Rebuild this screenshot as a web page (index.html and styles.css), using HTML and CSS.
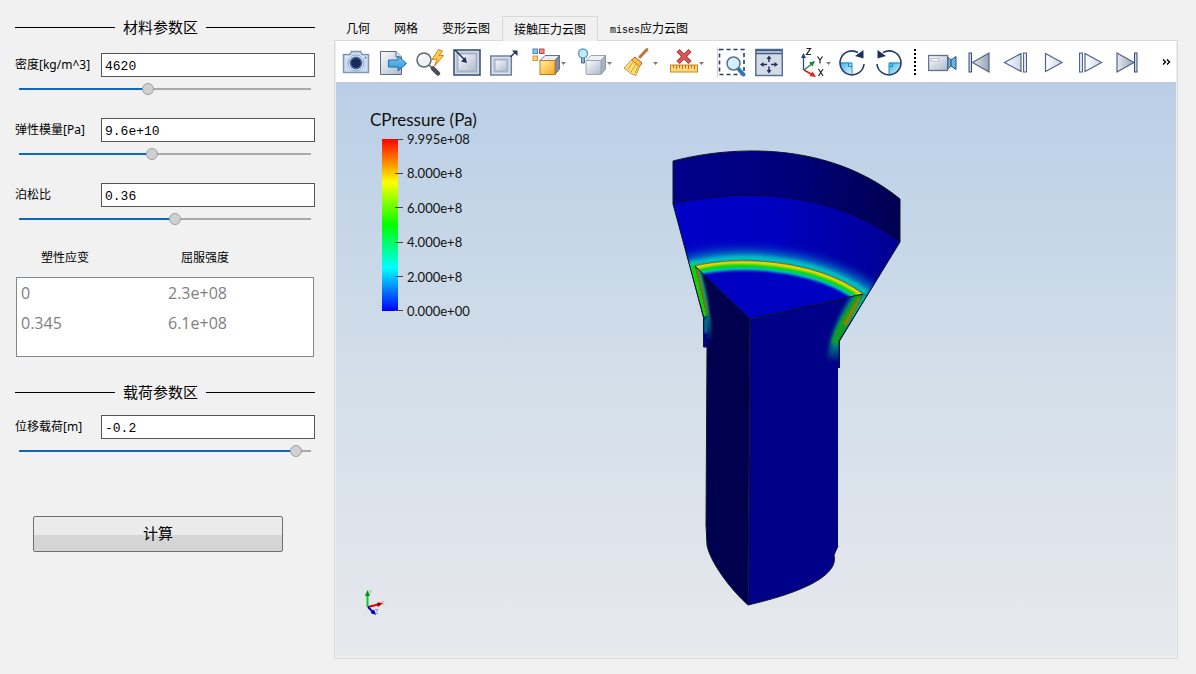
FILE: index.html
```html
<!DOCTYPE html>
<html lang="zh-CN">
<head>
<meta charset="utf-8">
<title>接触压力云图</title>
<link rel="stylesheet" href="styles.css">
</head>
<body>
<div class="app">
  <aside class="side">
    <h2 class="section-title">材料参数区</h2>
    <div class="fields">
      <div class="field">
        <label for="density">密度[kg/m^3]</label>
        <input class="value" id="density" type="text" value="4620">
        <input class="slider" type="range" aria-label="密度" min="0" max="1000" value="438" style="--fill:43.8%">
      </div>
      <div class="field">
        <label for="modulus">弹性模量[Pa]</label>
        <input class="value" id="modulus" type="text" value="9.6e+10">
        <input class="slider" type="range" aria-label="弹性模量" min="0" max="1000" value="452" style="--fill:45.2%">
      </div>
      <div class="field">
        <label for="poisson">泊松比</label>
        <input class="value" id="poisson" type="text" value="0.36">
        <input class="slider" type="range" aria-label="泊松比" min="0" max="1000" value="537" style="--fill:53.7%">
      </div>
    </div>
    <table class="plastic">
      <thead><tr><th>塑性应变</th><th>屈服强度</th></tr></thead>
      <tbody>
        <tr><td>0</td><td>2.3e+08</td></tr>
        <tr><td>0.345</td><td>6.1e+08</td></tr>
      </tbody>
    </table>
    <h2 class="section-title section-load">载荷参数区</h2>
    <div class="fields">
      <div class="field">
        <label for="load">位移载荷[m]</label>
        <input class="value" id="load" type="text" value="-0.2">
        <input class="slider" type="range" aria-label="位移载荷" min="0" max="1000" value="969" style="--fill:96.9%">
      </div>
    </div>
    <button class="compute" type="button">计算</button>
  </aside>

  <main class="main">
    <div class="tabs" role="tablist">
      <button class="tab" role="tab" type="button">几何</button>
      <button class="tab" role="tab" type="button">网格</button>
      <button class="tab" role="tab" type="button">变形云图</button>
      <button class="tab tab-active" role="tab" type="button" aria-selected="true">接触压力云图</button>
      <button class="tab" role="tab" type="button"><span class="latin">mises</span>应力云图</button>
    </div>
    <div class="pane">
      <svg class="defs" width="0" height="0" aria-hidden="true">
        <defs>
          <linearGradient id="steel" x1="0" y1="0" x2="1" y2="1"><stop offset="0" stop-color="#fbfcfe"/><stop offset="1" stop-color="#aeb8ca"/></linearGradient>
          <linearGradient id="sky" x1="0" y1="0" x2="0" y2="1"><stop offset="0" stop-color="#7cc8f4"/><stop offset="1" stop-color="#2a93d6"/></linearGradient>
          <linearGradient id="gold" x1="0" y1="0" x2="1" y2="1"><stop offset="0" stop-color="#fff0a8"/><stop offset="1" stop-color="#f7a51c"/></linearGradient>
          <linearGradient id="quad" x1="0" y1="0" x2="1" y2="1"><stop offset="0" stop-color="#37b4ea"/><stop offset="1" stop-color="#e4f5fd"/></linearGradient>
          <linearGradient id="play" x1="0" y1="0" x2="1" y2="0"><stop offset="0" stop-color="#ffffff"/><stop offset="1" stop-color="#ccd6e6"/></linearGradient>
          <linearGradient id="grey" x1="0" y1="0" x2="1" y2="0"><stop offset="0" stop-color="#e6e8ec"/><stop offset="1" stop-color="#9aa3b2"/></linearGradient>
        </defs>
      </svg>
      <div class="toolbar" role="toolbar">
        <button class="tool" type="button" aria-label="截图"><svg width="28" height="32"><path d="M1.500 8.500H8L9.500 5.500H18.500L20 8.500H26.500V26.500H1.500Z" fill="#c9def3" stroke="#8294b4" stroke-width="1.500" stroke-linejoin="round"/><path d="M3 11H25" stroke="#f2f8fe"/><circle cx="14" cy="17" r="8" fill="#e3edf7" stroke="#90a8c8"/><circle cx="14" cy="17" r="6.500" fill="#4a6c9f"/><circle cx="14" cy="17" r="4.800" fill="#182c5a"/><circle cx="23.500" cy="11.500" r="1" fill="#4e6ea5"/></svg></button>
        <button class="tool" type="button" aria-label="导出"><svg width="28" height="32"><path d="M1.500 5.500H17L22.500 11V28.500H1.500Z" fill="url(#steel)" stroke="#5c6b85"/><path d="M17 5.500V11H22.500" fill="#dfe5ee" stroke="#5c6b85"/><path d="M9.500 14H19V10L27.500 17.500L19 25V21H9.500Z" fill="url(#sky)" stroke="#1a6eae"/></svg></button>
        <button class="tool" type="button" aria-label="快速查询"><svg width="28" height="32"><path d="M13 19L16 22" stroke="#7a8089" stroke-width="2"/><path d="M17 22.500L22 27.500" stroke="#4b4e55" stroke-width="4.500" stroke-linecap="round"/><circle cx="8" cy="14" r="7" fill="#eef2f6" stroke="#5d6673" stroke-width="1.500"/><path d="M4 13Q5 9.500 9 9.500" stroke="#fff" stroke-width="2" fill="none"/><path d="M22.500 3.500L16 13.500L21 13L18.500 20L27.500 9.500H23L26.500 5Z" fill="#ffcf4d" stroke="#e57a1b"/></svg></button>
        <button class="tool" type="button" aria-label="缩放到数据"><svg width="28" height="32"><rect x="1" y="4" width="26" height="25" fill="#d3dae5" stroke="#3f547d" stroke-width="1.600"/><rect x="4.500" y="7.500" width="19" height="18" fill="url(#steel)" stroke="#a7b3c7" stroke-width="2"/><path d="M2 4L12 14" stroke="#233862" stroke-width="1.500"/><path d="M14 17L8 15.500L12.500 11Z" fill="#1c315c"/></svg></button>
        <button class="tool" type="button" aria-label="还原视图"><svg width="28" height="32"><rect x=".8" y="10" width="20.500" height="19" fill="#dce2eb" stroke="#6f7f9b" stroke-width="1.500"/><rect x="4.500" y="13.500" width="13" height="12" fill="url(#steel)" stroke="#a7b3c7" stroke-width="2"/><path d="M20.500 11L25 6.500" stroke="#233862" stroke-width="1.500"/><path d="M22 4.500H27.500V10Z" fill="#1c315c"/></svg></button>
        <button class="tool tool-menu" type="button" aria-label="着色"><svg width="40" height="32"><rect x="6" y="3" width="4.500" height="4.500" fill="#8cc7ea" stroke="#368bbd"/><rect x="12.500" y="3" width="4.500" height="4.500" fill="#ea8b8b" stroke="#c24848"/><rect x="6" y="10" width="4.500" height="4.500" fill="#fbd08a" stroke="#e59129"/><path d="M13 14.500L18 9.500H32.500L28 14.500Z" fill="#e8edf5" stroke="#65728a"/><path d="M28 14.500L32.500 9.500V23L28 28.500Z" fill="#7d8ba5" stroke="#65728a"/><rect x="13" y="14.500" width="15" height="14" fill="url(#gold)" stroke="#c37a16"/><path d="M34 16H39L36.500 19Z" fill="#7b7b7b"/></svg></button>
        <button class="tool tool-menu" type="button" aria-label="光照"><svg width="40" height="32"><path d="M13 14.500L18 9.500H32.500L28 14.500Z" fill="#eef0f3" stroke="#9ca5b3"/><path d="M28 14.500L32.500 9.500V23L28 28.500Z" fill="#abb3c0" stroke="#8d98a9"/><rect x="13" y="14.500" width="15" height="14" rx="1" fill="url(#steel)" stroke="#9ca5b3"/><path d="M8.500 11H11.500V17H8.500Z" fill="#9baac0" stroke="#53698d"/><circle cx="10" cy="7.500" r="4.500" fill="#c8e9fb" stroke="#4ba0d2" stroke-width="1.400"/><path d="M34 16H39L36.500 19Z" fill="#7b7b7b"/></svg></button>
        <button class="tool tool-menu" type="button" aria-label="清除"><svg width="40" height="32"><path d="M21 11L28 3.500" stroke="#bd733a" stroke-width="3" stroke-linecap="round"/><path d="M16 11L23 17L20.500 20.500L12.500 14Z" fill="#f9bf48" stroke="#a35d28"/><path d="M12.500 14L20.500 20.500L17 29.500L12 27.500L9 25L5 22Z" fill="#ffe27b" stroke="#d28d24"/><path d="M14 16L9 23M17 18L12 26M19 20L16 27" stroke="#d89b2d" fill="none"/><path d="M34 16H39L36.500 19Z" fill="#7b7b7b"/></svg></button>
        <button class="tool tool-menu" type="button" aria-label="删除标尺"><svg width="40" height="32"><path d="M13 4.500L25 16.500M25 4.500L13 16.500" stroke="#a93838" stroke-width="4.500"/><path d="M13.500 5L24.500 16M24.500 5L13.500 16" stroke="#d85858" stroke-width="2.600"/><rect x="5.500" y="19" width="27" height="7" fill="#ffd878" stroke="#cc8422"/><path d="M8.500 19V22M11.500 19V23M14.500 19V22M17.500 19V23M20.500 19V22M23.500 19V23M26.500 19V22M29.500 19V23" stroke="#b56c1c"/><path d="M34 16H39L36.500 19Z" fill="#7b7b7b"/></svg></button>
        <span class="divider"></span>
        <button class="tool" type="button" aria-label="框选缩放"><svg width="28" height="32"><rect x="1.500" y="3.500" width="24.500" height="25" fill="none" stroke="#24406e" stroke-width="1.600" stroke-dasharray="4 3"/><path d="M20 22.500L25.500 28.500" stroke="#2d79b7" stroke-width="4" stroke-linecap="round"/><circle cx="15.500" cy="17.500" r="6.500" fill="#d5effb" stroke="#527392" stroke-width="1.500"/></svg></button>
        <button class="tool" type="button" aria-label="适应窗口"><svg width="28" height="32"><rect x=".8" y="3.500" width="26.500" height="26" fill="#d4dbe6" stroke="#5a6f95" stroke-width="1.500"/><path d="M1 4.500H27M1 7.500H27" stroke="#3d5888" stroke-width="1.500"/><path d="M14 11.500V16M14 20.500V25M7.500 18.500H12M16 18.500H20.500" stroke="#1f3259" stroke-width="1.500"/><path d="M14 9.500L16.500 13H11.500ZM14 27.500L16.500 24H11.500ZM5 18.500L8.500 16V21ZM23 18.500L19.500 16V21Z" fill="#1f3259"/></svg></button>
        <button class="tool tool-menu" type="button" aria-label="坐标轴方向"><svg width="40" height="32"><path d="M11.500 24V10" stroke="#264791" stroke-width="1.300"/><path d="M11.500 7L14 12H9Z" fill="#233f96"/><path d="M12 24L19 18.500" stroke="#16853c" stroke-width="1.300"/><path d="M23 15L20.500 20.500L17 16.500Z" fill="#16853c"/><path d="M12 24L19 28" stroke="#e11c1c" stroke-width="1.500"/><path d="M24 31L17.500 30L20.500 25.500Z" fill="#e11c1c"/><path d="M14.500 2.500H18.500L14.500 8.500H19M25.500 10.500L28 14L30.500 10.500M28 14V17.500M26.500 23L31 30M31 23L26.500 30" fill="none" stroke="#222" stroke-width="1.200"/><path d="M34 16H39L36.500 19Z" fill="#7b7b7b"/></svg></button>
        <button class="tool" type="button" aria-label="顺时针旋转"><svg width="28" height="32"><path d="M2 16.500H14V29Q3 27 2 16.500Z" fill="url(#quad)"/><path d="M2 17H14V29" fill="none" stroke="#2788bc"/><path d="M10.500 17V20.500H14" fill="none" stroke="#2788bc"/><path d="M20 6.500A12 12 0 1 0 26 18" fill="none" stroke="#263c68" stroke-width="1.600"/><path d="M25.500 4V12.500L17 10Z" fill="#1c315c"/></svg></button>
        <button class="tool" type="button" aria-label="逆时针旋转"><svg width="28" height="32"><path d="M26 16.500H14V29Q25 27 26 16.500Z" fill="url(#quad)"/><path d="M26 17H14V29" fill="none" stroke="#2788bc"/><path d="M17.500 17V20.500H14" fill="none" stroke="#2788bc"/><path d="M8 6.500A12 12 0 1 1 2 18" fill="none" stroke="#263c68" stroke-width="1.600"/><path d="M2.500 4V12.500L11 10Z" fill="#1c315c"/></svg></button>
        <span class="grip"></span>
        <button class="tool" type="button" aria-label="录制"><svg width="30" height="32"><rect x=".6" y="9.500" width="19" height="15" fill="url(#steel)" stroke="#61718f" stroke-width="1.300"/><rect x="3" y="12.500" width="8" height="2.500" fill="#fff" stroke="#a5aebd" stroke-width=".7"/><path d="M20 11L23 14V20L20 23Z" fill="#72b8df" stroke="#3e6287"/><path d="M23 14L28 10.500V23.500L23 20Z" fill="#60b6e4" stroke="#304d78"/></svg></button>
        <button class="tool" type="button" aria-label="首帧"><svg width="28" height="32"><rect x="4" y="7" width="2.500" height="19" fill="#cbd6e5" stroke="#344c78"/><path d="M24 7V26L7.500 16.500Z" fill="url(#grey)" stroke="#50648a" stroke-width="1.200"/></svg></button>
        <button class="tool" type="button" aria-label="上一帧"><svg width="28" height="32"><path d="M19 7.500V25.500L2.500 16.500Z" fill="url(#play)" stroke="#50648a" stroke-width="1.200"/><rect x="21.500" y="7" width="3" height="19" fill="#dce4ef" stroke="#50648a"/></svg></button>
        <button class="tool" type="button" aria-label="播放"><svg width="28" height="32"><path d="M6.500 7.500V25.500L23 16.500Z" fill="url(#play)" stroke="#50648a" stroke-width="1.200"/></svg></button>
        <button class="tool" type="button" aria-label="下一帧"><svg width="28" height="32"><rect x="3.500" y="7" width="3" height="19" fill="#dce4ef" stroke="#50648a"/><path d="M9 7.500V25.500L25.500 16.500Z" fill="url(#play)" stroke="#50648a" stroke-width="1.200"/></svg></button>
        <button class="tool" type="button" aria-label="末帧"><svg width="28" height="32"><path d="M4 7V26L21 16.500Z" fill="url(#grey)" stroke="#50648a" stroke-width="1.200"/><rect x="21.500" y="7" width="2.500" height="19" fill="#cbd6e5" stroke="#344c78"/></svg></button>
        <button class="more" type="button" aria-label="更多"><svg width="9" height="8"><path d="M1 1.500L3.500 4L1 6.500M5 1.500L7.500 4L5 6.500" fill="none" stroke="#000" stroke-width="1.400"/></svg></button>
      </div>
      <div class="viewport">
        <svg class="scene" viewBox="336 82 840 574" role="img" aria-label="接触压力模型">
          <defs>
            <linearGradient id="rim"><stop offset="0" stop-color="#00008a"/><stop offset=".5" stop-color="#00007c"/><stop offset="1" stop-color="#000050"/></linearGradient>
            <linearGradient id="cone"><stop offset="0" stop-color="#0000c8"/><stop offset=".45" stop-color="#0000c0"/><stop offset="1" stop-color="#000092"/></linearGradient>
            <linearGradient id="fadeL" x1="0" y1="266" x2="0" y2="342" gradientUnits="userSpaceOnUse"><stop offset="0" stop-color="#00b880"/><stop offset=".6" stop-color="#008f78"/><stop offset="1" stop-color="#000070"/></linearGradient>
            <linearGradient id="fadeR" x1="0" y1="294" x2="0" y2="362" gradientUnits="userSpaceOnUse"><stop offset="0" stop-color="#008c90"/><stop offset=".7" stop-color="#009a78"/><stop offset="1" stop-color="#000088"/></linearGradient>
            <filter id="soft1" x="-30%" y="-30%" width="160%" height="160%"><feGaussianBlur stdDeviation="1"/></filter>
            <filter id="soft2" x="-30%" y="-50%" width="160%" height="200%"><feGaussianBlur stdDeviation="2"/></filter>
            <filter id="soft5" x="-30%" y="-80%" width="160%" height="260%"><feGaussianBlur stdDeviation="5"/></filter>
            <clipPath id="clipCone"><path d="M673 204C735 189 830 188 900 242L839 341L750 330L704 347V317Z"/></clipPath>
            <clipPath id="clipTop"><path d="M695 266C735 256 815 258 863 294L750 319Z"/></clipPath>
            <clipPath id="clipLeft"><path d="M695 266L750 319L748 605L707 545V317Z"/></clipPath>
            <clipPath id="clipRight"><path d="M750 319L863 294L839 341V368H837V545L748 605Z"/></clipPath>
          </defs>
          <path d="M673 204L703 317V347H708V317H839V368H840V341L900 242V225L790 180Z" fill="url(#cone)"/>
          <g clip-path="url(#clipCone)" fill="none">
            <path d="M684 263C735 250 815 252 874 293" stroke="#0074c4" stroke-width="12" filter="url(#soft5)"/>
            <path d="M690 265C735 253 815 255 868 294" stroke="#00d5bd" stroke-width="6" filter="url(#soft2)"/>
            <path d="M690 262L705 318" stroke="#00c89a" stroke-width="12" filter="url(#soft1)"/>
            <path d="M693 266L706 316" stroke="#18cf00" stroke-width="7" filter="url(#soft1)"/>
            <path d="M866 296L840 340" stroke="#00b47b" stroke-width="8" filter="url(#soft1)"/>
          </g>
          <path d="M704 318H708V347H704Z" fill="#000090"/>
          <path d="M704 318H708V333H704Z" fill="#006e8c" filter="url(#soft1)"/>
          <path d="M695 266L750 319L748 605C731 590 710 562 707 545L706 525L707 347V317Z" fill="#00004f"/>
          <g clip-path="url(#clipLeft)" fill="none">
            <path d="M697 268C703 290 708 310 709 340" stroke="url(#fadeL)" stroke-width="6" filter="url(#soft1)"/>
            <path d="M696 269L706 315" stroke="#a06a00" stroke-width="4" filter="url(#soft1)"/>
          </g>
          <path d="M695 266C735 256 815 258 863 294L750 319Z" fill="#0000c2"/>
          <g clip-path="url(#clipTop)" fill="none">
            <path d="M695 266C735 256 815 258 863 294" stroke="#00c7d0" stroke-width="19" filter="url(#soft1)"/>
            <path d="M695 266C735 256 815 258 863 294" stroke="#05d51b" stroke-width="14" filter="url(#soft1)"/>
            <path d="M695 266C735 256 815 258 863 294" stroke="#f0d800" stroke-width="7" filter="url(#soft1)"/>
          </g>
          <path d="M750 319L863 294L839 341V368H838V546L834 555C839 575 804 592 748 605Z" fill="#000088"/>
          <g clip-path="url(#clipRight)" fill="none">
            <path d="M861 294C847 317 837 335 834 362" stroke="url(#fadeR)" stroke-width="14" filter="url(#soft2)"/>
            <path d="M862 296C850 315 840 329 837 344" stroke="#0c9e20" stroke-width="11" filter="url(#soft1)"/>
            <path d="M861 298L845 325" stroke="#9a8000" stroke-width="5" filter="url(#soft1)"/>
          </g>
          <path d="M673 161C735 145 830 142 900 199V242C830 188 735 189 673 204Z" fill="url(#rim)"/>
          <g fill="none" stroke="#111827" stroke-width="1">
            <path d="M673 204V161C735 145 830 142 900 199V242L839 341V368"/>
            <path d="M673 204L703.500 317V347H707M703 317H707"/>
            <path d="M673 204C735 189 830 188 900 242" stroke="#00003a"/>
            <path d="M695 266L750 319L863 294M750 319L748 605M707 347L706 525L707 545C710 562 731 590 748 605C804 592 839 575 834 555L838 546"/>
            <path d="M695 266C735 256 815 258 863 294" stroke="#765c13" stroke-width=".7"/>
          </g>
          <g stroke-width="1.500">
            <path d="M367.500 607V594" stroke="#00cf22" stroke-width="2"/><path d="M367.500 590L370 596H365Z" fill="#078d1a"/>
            <path d="M368 607L378 604.500" stroke="#e60000" stroke-width="2"/><path d="M383 603L378 607L377 602.500Z" fill="#930000"/>
            <path d="M368 607L373 612" stroke="#0000e0" stroke-width="2"/><path d="M376 615L370.500 613L374 609.500Z" fill="#00008d"/>
            <g fill="none" stroke-width=".8"><path d="M369 590L370.500 592L372 590M370.500 592V594" stroke="#5de070"/><path d="M381 601L384 605M384 601L381 605" stroke="#f08080"/><path d="M375 609.500H378L375 613.500H378" stroke="#8080f0"/></g>
          </g>
        </svg>
        <div class="legend">
          <div class="legend-title">CPressure (Pa)</div>
          <div class="legend-body">
            <div class="legend-bar"></div>
            <ul class="legend-labels">
              <li>9.995e+08</li><li>8.000e+8</li><li>6.000e+8</li><li>4.000e+8</li><li>2.000e+8</li><li>0.000e+00</li>
            </ul>
          </div>
        </div>
      </div>
    </div>
  </main>
</div>
</body>
</html>
```
FILE: styles.css
```css
* { box-sizing: border-box; }

body {
  margin: 0;
  background: #f1f1f1;
  color: #000;
  font-family: "Noto Sans", "Noto Sans CJK SC", sans-serif;
  font-size: 12px;
}

button, input { font: inherit; color: inherit; margin: 0; }

.app { display: flex; min-height: 100vh; }

/* Parameter column */
.side { flex: 0 0 334px; padding: 15px 19px 0 15px; }

.section-title {
  display: flex;
  align-items: center;
  gap: 8px;
  margin: 0 0 14px;
  font-family: "Noto Sans CJK SC", sans-serif;
  font-size: 15px;
  font-weight: 400;
  line-height: 24px;
}
.section-title::before, .section-title::after { content: ""; height: 1px; background: #000; }
.section-title::before { width: 100px; }
.section-title::after { flex: 1; }
.section-load { margin: 23px 0 11px; }

.fields { display: grid; gap: 23px; }
.field { display: grid; grid-template-columns: 86px 1fr; row-gap: 6px; align-items: center; }
.field label { line-height: 24px; white-space: nowrap; }

.value {
  width: 100%;
  height: 24px;
  padding: 2px 3px 0;
  border: 1px solid #555;
  background: #fff;
  font-family: "Liberation Mono", monospace;
  font-size: 13px;
}

.slider {
  grid-column: 1 / -1;
  appearance: none;
  height: 12px;
  margin: 0 4px;
  background: linear-gradient(#0d69bd, #0d69bd) 0 5px / var(--fill) 2px no-repeat,
    linear-gradient(#aaa, #aaa) 0 5px / 100% 2px no-repeat;
}
.slider::-webkit-slider-thumb {
  appearance: none;
  width: 12px;
  height: 12px;
  border: 1px solid #9f9f9f;
  border-radius: 50%;
  background: #d0d0d0;
}

.plastic { display: block; margin-top: 24px; }
.plastic thead, .plastic tbody { display: block; }
.plastic tr { display: grid; grid-template-columns: 147px 1fr; }
.plastic thead tr { grid-template-columns: 140px 1fr; }
.plastic th { padding: 0 0 0 26px; font-weight: 400; line-height: 18px; text-align: left; }
.plastic tbody {
  height: 80px;
  margin: 10px 1px 0;
  padding: 0 4px;
  border: 1px solid #828790;
  background: #fff;
  color: #808080;
  font-family: "Open Sans", sans-serif;
  font-size: 16px;
}
.plastic td { padding: 0; line-height: 30px; }

.compute {
  display: block;
  width: 250px;
  height: 36px;
  margin: 59px 0 0 18px;
  padding: 0 0 4px;
  border: 1px solid #707070;
  border-radius: 2px;
  background: linear-gradient(#ebebeb 0 52%, #d5d5d5 52%);
  font-family: "Noto Sans CJK SC", sans-serif;
  font-size: 15px;
}

/* Result area */
.main { flex: 1; min-width: 0; display: flex; flex-direction: column; padding: 16px 18px 15px 0; }
.tabs { display: flex; height: 24px; }
.tab {
  padding: 0 12px;
  border: 0;
  background: none;
  font-family: "Noto Sans CJK SC", sans-serif;
  line-height: 24px;
  white-space: nowrap;
}
.tab-active { height: 25px; padding: 0 11px; border: 1px solid #d9d9d9; border-bottom: 0; background: #f1f1f1; z-index: 1; }
.latin { font-family: "Liberation Mono", monospace; font-size: 10px; }

.pane { flex: 1; display: flex; flex-direction: column; padding: 0 1px 2px; border: 1px solid #d9d9d9; }
.defs { display: block; height: 0; }
.toolbar { display: flex; align-items: center; height: 41px; padding-left: 6px; background: #fff; }
.tool { flex: 0 0 37px; height: 36px; padding: 0; border: 0; background: none; text-align: left; }
.tool svg { display: block; }
.tool-menu { flex-basis: 46px; }
.divider { flex: 0 0 7px; height: 30px; border-right: 1px solid #d4d4d4; }
.grip { flex: 0 0 16px; height: 26px; background: repeating-linear-gradient(#000 0 2px, transparent 2px 4px) 2px 0 / 2px 100% no-repeat; }
.more { margin-left: auto; padding: 0 5px; border: 0; background: none; }
.more svg { display: block; }

.viewport { flex: 1; position: relative; min-height: 400px; background: linear-gradient(#b9cee6, #d2dee9 50%, #e7e9ed); }
.scene { position: absolute; width: 100%; height: 100%; }
.legend { position: absolute; left: 34px; top: 28px; color: #111; font-family: Lato, sans-serif; }
.legend-title { font-size: 17px; line-height: 20px; }
.legend-body { display: flex; margin: 2px 0 0 12px; }
.legend-bar { width: 16px; height: 172px; margin-top: 7px; background: linear-gradient(#f00, #ff0 25%, #0f0 50%, #0ff 75%, #00f); }
.legend-labels { display: flex; flex-direction: column; justify-content: space-between; height: 186px; margin: 0; padding: 0; list-style: none; font-size: 13px; line-height: 14px; }
.legend-labels li { display: flex; align-items: center; gap: 4px; }
.legend-labels li::before { content: ""; width: 8px; height: 1px; margin-left: -3px; background: #444; }
```
